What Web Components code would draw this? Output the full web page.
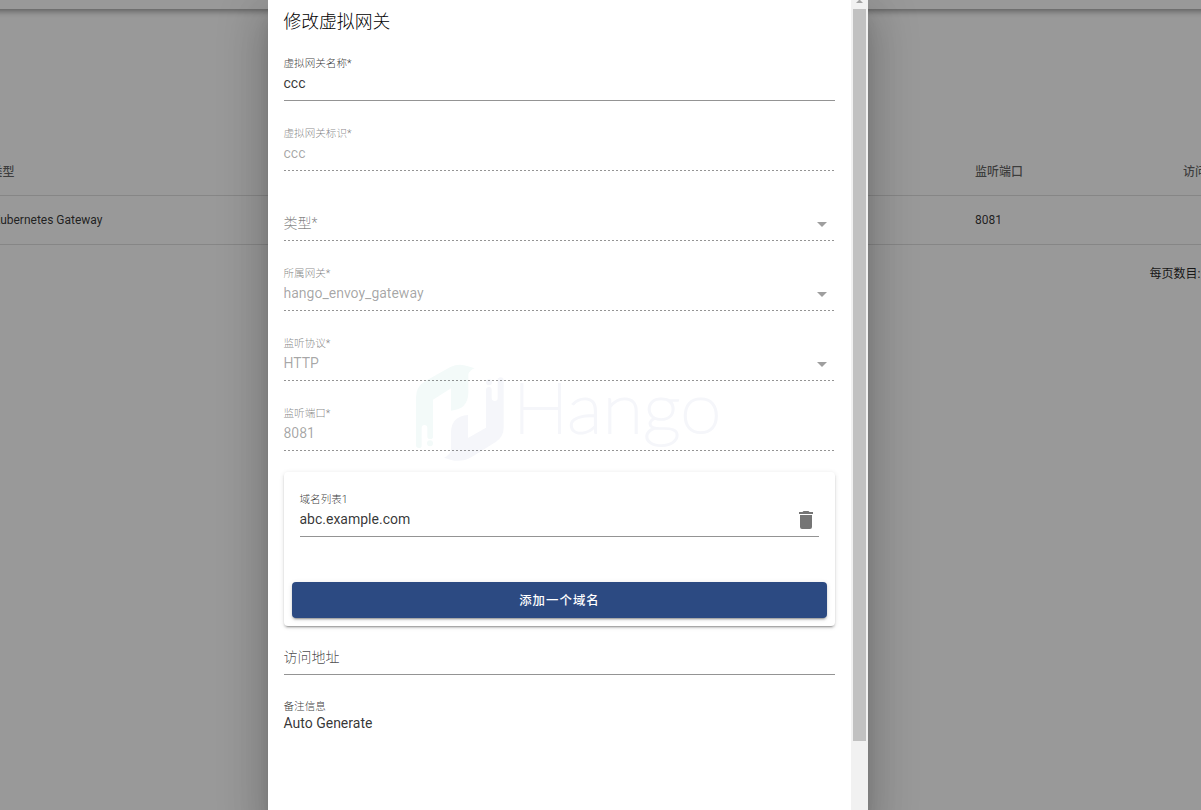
<!DOCTYPE html>
<html lang="zh-CN">
<head>
<meta charset="utf-8">
<title>修改虚拟网关</title>
<style>
html,body{margin:0;height:100%;overflow:hidden;background:#fff}
body{position:relative;font-family:Roboto,"Noto Sans CJK SC",sans-serif;color:rgba(0,0,0,.87)}
</style>
</head>
<body>
<gateway-table></gateway-table>
<modal-dialog>
  <hango-watermark slot="backdrop"></hango-watermark>
  <span slot="title">修改虚拟网关</span>
  <form-field label="虚拟网关名称*">ccc</form-field>
  <form-field label="虚拟网关标识*" disabled>ccc</form-field>
  <form-field placeholder disabled select>类型*</form-field>
  <form-field label="所属网关*" disabled select>hango_envoy_gateway</form-field>
  <form-field label="监听协议*" disabled select>HTTP</form-field>
  <form-field label="监听端口*" disabled>8081</form-field>
  <domain-card>
    <form-field label="域名列表1" removable>abc.example.com</form-field>
    <primary-button slot="action">添加一个域名</primary-button>
  </domain-card>
  <form-field placeholder style="--height:49px">访问地址</form-field>
  <form-field label="备注信息" multiline>Auto Generate</form-field>
</modal-dialog>
<script>
const define = (name, html) => {
  const t = document.createElement('template');
  t.innerHTML = html;
  customElements.define(name, class extends HTMLElement {
    constructor() {
      super();
      this.attachShadow({mode: 'open'}).append(t.content.cloneNode(true));
    }
    connectedCallback() {
      const label = this.shadowRoot.querySelector('.label');
      if (label) label.textContent = this.getAttribute('label') || '';
    }
  });
};

define('gateway-table', `
<style>
:host{display:flex;flex-direction:column;height:100%;overflow:hidden;font-size:12px}
.bar{height:9px;flex:none;margin:0 -12px;box-shadow:0 2px 4px -1px rgba(0,0,0,.2),0 4px 5px rgba(0,0,0,.14),0 1px 10px rgba(0,0,0,.12)}
.table{margin-top:139px}
.row{display:grid;grid-template-columns:975px 208px 1fr;height:48px;align-items:center;border-bottom:1px solid rgba(0,0,0,.12);white-space:nowrap;color:rgba(0,0,0,.8)}
.row.head{height:45px;padding-bottom:2px;color:rgba(0,0,0,.62);font-weight:500}
.row span:first-child{display:flex;width:102.5px;justify-content:flex-end}
.row.head span:first-child{width:14.5px}
.foot{display:flex;height:55px;align-items:center;padding-left:1149.5px;white-space:nowrap}
</style>
<div class="bar"></div>
<div class="table">
<div class="row head"><span>类型</span><span>监听端口</span><span>访问地址</span></div>
<div class="row"><span>Kubernetes Gateway</span><span>8081</span><span></span></div>
<div class="foot">每页数目:</div>
</div>`);

define('modal-dialog', `
<style>
:host{display:block;position:absolute;inset:0;overflow:hidden;background:rgba(0,0,0,.4)}
.dialog{position:relative;display:flex;width:600px;height:820px;margin-left:268px;background:#fff;box-shadow:0 11px 15px -7px rgba(0,0,0,.2),0 24px 38px 3px rgba(0,0,0,.14),0 9px 46px 8px rgba(0,0,0,.12)}
.content{flex:1;position:relative;padding:0 16px 0 15.5px}
h1{margin:0;height:31px;line-height:44px;font-size:17.8px;font-weight:300;color:#000;overflow:visible}
.track{width:13px;padding:0 2px;background:#f1f1f1}
.arrow{display:block;height:9px;width:13px}
.thumb{height:732px;background:#c1c1c1}
</style>
<div class="dialog">
<div class="content"><slot name="backdrop"></slot><h1><slot name="title"></slot></h1><slot></slot></div>
<div class="track"><svg class="arrow" viewBox="0 0 13 9"><path d="M3 3 6.5-.5 10 3Z" fill="#a3a3a3"/></svg><div class="thumb"></div></div>
</div>`);

define('form-field', `
<style>
:host{display:flex;flex-direction:column;justify-content:flex-end;box-sizing:border-box;height:var(--height,70px);position:relative;font-size:14px;line-height:20px}
.label{height:20px;line-height:22px;font-size:10.6px;color:rgba(0,0,0,.8);font-weight:300}
.value{display:flex;justify-content:space-between;height:20px;padding-bottom:7px;white-space:nowrap;color:rgba(0,0,0,.8)}
.line{height:1px;margin-left:.5px;background:rgba(0,0,0,.42)}
svg{display:none;width:24px;height:24px;flex:none}
:host([placeholder]) .value{color:rgba(0,0,0,.72);font-weight:300}
:host([disabled]) .value{color:rgba(0,0,0,.36)}
:host([disabled]) .label{color:rgba(0,0,0,.52)}
:host([disabled][placeholder]) .value{color:rgba(0,0,0,.5)}
:host([disabled]) .line{background:repeating-linear-gradient(to right,rgba(0,0,0,.42) 0 2px,transparent 2px 4px)}
:host([select]) .caret{display:block;margin:-1px 1px 0 0}
:host([removable]) .bin{display:block;margin:-1px 1px 0 0}
:host([placeholder]) .label{display:none}
:host([multiline]){height:58px}
:host([multiline]) .label{height:17px;line-height:22px}
:host([multiline]) .line{background:none}
:host([multiline]) .value{height:19px;padding:0}
</style>
<div class="label"></div>
<div class="value"><slot></slot>
<svg class="caret" viewBox="0 0 24 24"><path d="M7 10l5 5 5-5z" fill="rgba(0,0,0,.38)"/></svg>
<svg class="bin" viewBox="0 0 24 24"><path d="M19,4H15.5L14.5,3H9.5L8.5,4H5V6H19M6,19A2,2 0 0,0 8,21H16A2,2 0 0,0 18,19V7H6V19Z" fill="rgba(0,0,0,.54)"/></svg>
</div><div class="line"></div>`);

define('domain-card', `
<style>
:host{display:block;box-sizing:border-box;height:154px;margin-top:21px;margin-left:.5px;padding:0 8px 8px;border-radius:4px;background:#fff;position:relative;box-shadow:0 3px 1px -2px rgba(0,0,0,.2),0 2px 2px rgba(0,0,0,.14),0 1px 5px rgba(0,0,0,.12)}
.fields{padding:0 8px 45px 7.5px;--height:65px}
</style>
<div class="fields"><slot></slot></div><slot name="action"></slot>`);

define('primary-button', `
<style>
:host{display:block}
button{display:block;width:100%;height:36px;border:0;border-radius:4px;padding:2px 0 0;background:#2c4a82;color:#fff;font:500 12.4px/34px Roboto,"Noto Sans CJK SC",sans-serif;letter-spacing:1.05px;box-shadow:0 3px 1px -2px rgba(0,0,0,.2),0 2px 2px rgba(0,0,0,.14),0 1px 5px rgba(0,0,0,.12)}
</style>
<button><slot></slot></button>`);

define('hango-watermark', `
<style>
:host{display:block;position:absolute;left:132px;top:350px;width:330px;height:120px}
svg{display:block;width:330px;height:120px}
text{font-family:Lato,sans-serif;font-weight:100;font-size:212px;fill:#f5f6fa;stroke:#f5f6fa;stroke-width:6px}
</style>
<svg viewBox="0 0 990 360">
<path fill="#f3faf9" d="M48 288V142Q48 110 75 94L151 51Q178 38 204 49L224 55Q209 61 205 72V130Q203 179 153 182V115L99 149V260Q99 267 91 267Q82 267 82 260V235Q82 225 73 225Q65 225 65 235V287Q65 294 57 294Q49 294 48 288Z"/>
<circle cx="90" cy="280" r="9" fill="#f3faf9"/>
<path fill="#f5f6fa" d="M311 91V233Q311 260 287 276L215 321Q184 339 151 329L132 323Q151 315 153 299V245Q155 199 204 195V264L258 233V120Q258 111 267 111Q275 111 275 120V145Q276 153 284 153Q293 153 293 145V91Q293 82 302 82Q311 82 311 91Z"/>
<circle cx="267" cy="97" r="9" fill="#f5f6fa"/>
<text x="338" y="248" textLength="626" lengthAdjust="spacingAndGlyphs">Hango</text>
</svg>`);
</script>
</body>
</html>
